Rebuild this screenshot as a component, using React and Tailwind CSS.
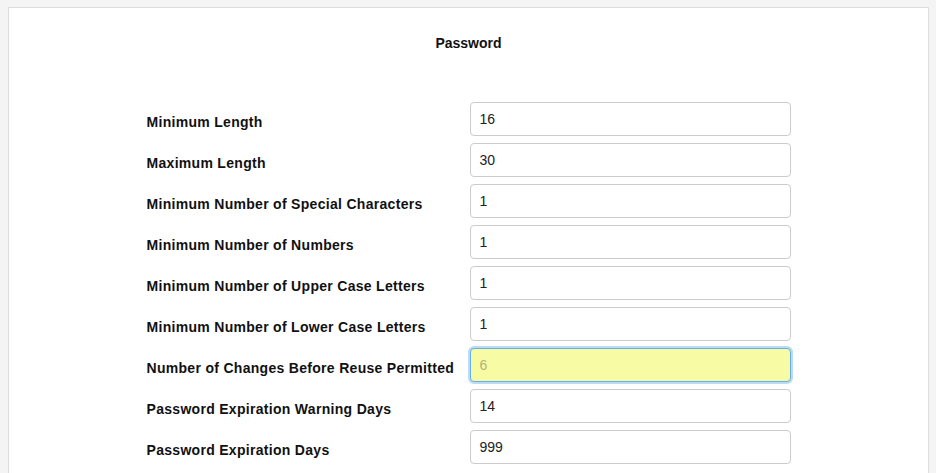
export default function App() {
  const rows = [
    ["Minimum Length", "16"],
    ["Maximum Length", "30"],
    ["Minimum Number of Special Characters", "1"],
    ["Minimum Number of Numbers", "1"],
    ["Minimum Number of Upper Case Letters", "1"],
    ["Minimum Number of Lower Case Letters", "1"],
    ["Number of Changes Before Reuse Permitted", "6", true],
    ["Password Expiration Warning Days", "14"],
    ["Password Expiration Days", "999"],
  ];
  return (
    <div
      className="h-[473px] overflow-hidden bg-[#f4f4f4] pl-[8px] pr-[7px] pt-[7px]"
      style={{ fontFamily: '"Liberation Sans", Arial, sans-serif' }}
    >
      <div className="h-[600px] border border-[#dddddd] bg-white pt-[25px]">
        <div className="text-center text-[14px] font-bold leading-[20px] text-[#111]">Password</div>
        <div className="mx-auto mt-[49px] w-[644px]">
          {rows.map(([label, value, focused]) => (
            <div key={label} className="mb-[7px] flex">
              <div className="w-[323px] pt-[10px] text-[14px] font-bold leading-[20px] tracking-[0.3px] text-[#111]">
                {label}
              </div>
              {focused ? (
                <div className="flex h-[34px] w-[321px] items-center rounded-[4px] border border-[#66afe9] bg-[#f7fca4] px-[9px] text-[14px] text-[#b0b374] shadow-[0_0_0_2px_#bcdbf8]">
                  {value}
                </div>
              ) : (
                <div className="flex h-[34px] w-[321px] items-center rounded-[4px] border border-[#cccccc] bg-white px-[9px] text-[14px] text-[#222]">
                  {value}
                </div>
              )}
            </div>
          ))}
        </div>
      </div>
    </div>
  );
}
